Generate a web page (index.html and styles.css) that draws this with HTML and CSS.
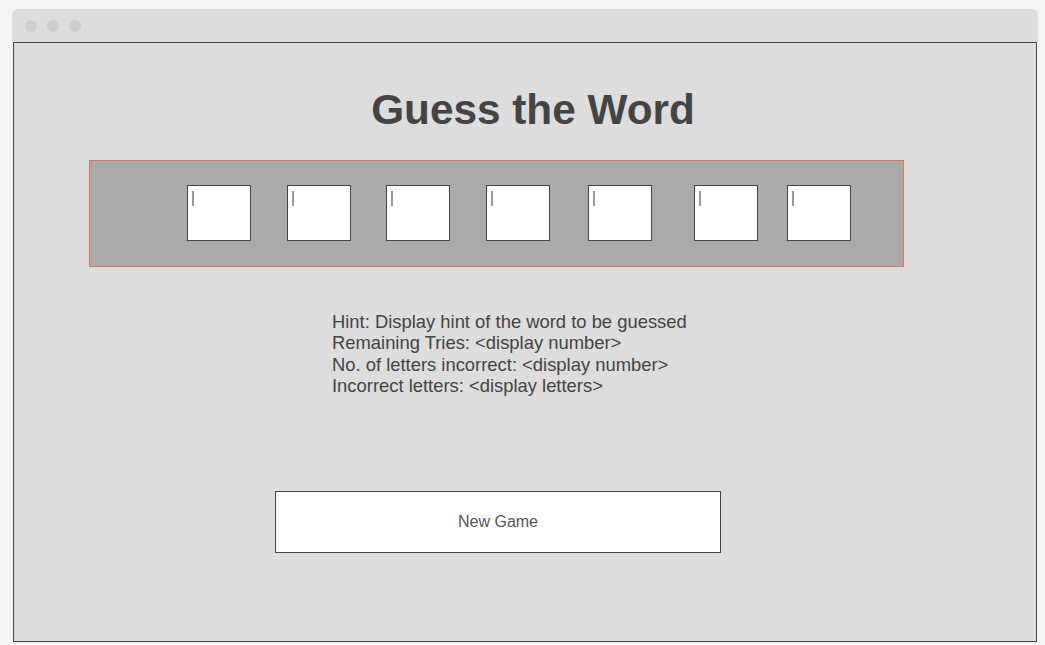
FILE: index.html
```html
<!DOCTYPE html>
<html>
<head>
<meta charset="utf-8">
<title>Guess the Word</title>
<link rel="stylesheet" href="styles.css">
</head>
<body>
<div class="window">
  <div class="titlebar">
    <span class="dot"></span><span class="dot"></span><span class="dot"></span>
  </div>
  <div class="content">
    <h1 class="title">Guess the Word</h1>
    <div class="board">
      <div class="cell"><span class="caret"></span></div>
      <div class="cell"><span class="caret"></span></div>
      <div class="cell"><span class="caret"></span></div>
      <div class="cell"><span class="caret"></span></div>
      <div class="cell"><span class="caret"></span></div>
      <div class="cell"><span class="caret"></span></div>
      <div class="cell"><span class="caret"></span></div>
    </div>
    <div class="info">
      <div>Hint: Display hint of the word to be guessed</div>
      <div>Remaining Tries: &lt;display number&gt;</div>
      <div>No. of letters incorrect: &lt;display number&gt;</div>
      <div>Incorrect letters: &lt;display letters&gt;</div>
    </div>
    <button class="new-game">New Game</button>
  </div>
</div>
</body>
</html>
```

FILE: styles.css
```css
html, body {
  margin: 0;
  padding: 0;
  background: #f4f4f4;
  font-family: "Liberation Sans", Arial, sans-serif;
}

.window {
  margin: 9px 0 0 12px;
  width: 1026px;
}

.titlebar {
  height: 33px;
  background: #dddddd;
  border-radius: 6px 6px 0 0;
  display: flex;
  align-items: center;
  padding-left: 13px;
  gap: 10px;
  box-sizing: border-box;
}

.dot {
  width: 12px;
  height: 12px;
  border-radius: 50%;
  background: #cdcdcd;
}

.content {
  margin-left: 1px;
  width: 1024px;
  height: 600px;
  box-sizing: border-box;
  border: 1px solid #444;
  background: #dddddd;
  overflow: hidden;
}

.title {
  margin: 46px 0 0;
  padding-left: 16px;
  font-size: 42.3px;
  line-height: 42px;
  font-weight: bold;
  color: #444;
  text-align: center;
}

.board {
  margin: 29px 0 0 75px;
  width: 815px;
  height: 107px;
  box-sizing: border-box;
  border: 1px solid #e2735f;
  background: #aaaaaa;
  display: flex;
  align-items: flex-start;
  padding-top: 24px;
}

.cell {
  position: relative;
  width: 64px;
  height: 56px;
  box-sizing: border-box;
  border: 1px solid #444;
  background: #fff;
  flex: none;
}

.cell:nth-child(1) { margin-left: 97px; }
.cell:nth-child(2) { margin-left: 36px; }
.cell:nth-child(3) { margin-left: 35px; }
.cell:nth-child(4) { margin-left: 36px; }
.cell:nth-child(5) { margin-left: 38px; }
.cell:nth-child(6) { margin-left: 42px; }
.cell:nth-child(7) { margin-left: 29px; }

.caret {
  position: absolute;
  left: 4px;
  top: 5px;
  width: 2px;
  height: 15px;
  background: #999;
}

.info {
  margin: 44px 0 0 318px;
  font-size: 18.4px;
  line-height: 21.4px;
  color: #444;
}

.new-game {
  display: block;
  margin: 94px 0 0 261px;
  width: 446px;
  height: 62px;
  box-sizing: border-box;
  border: 1px solid #444;
  background: #fff;
  font-family: "Liberation Sans", Arial, sans-serif;
  font-size: 16px;
  color: #555;
  padding: 0;
}
```
